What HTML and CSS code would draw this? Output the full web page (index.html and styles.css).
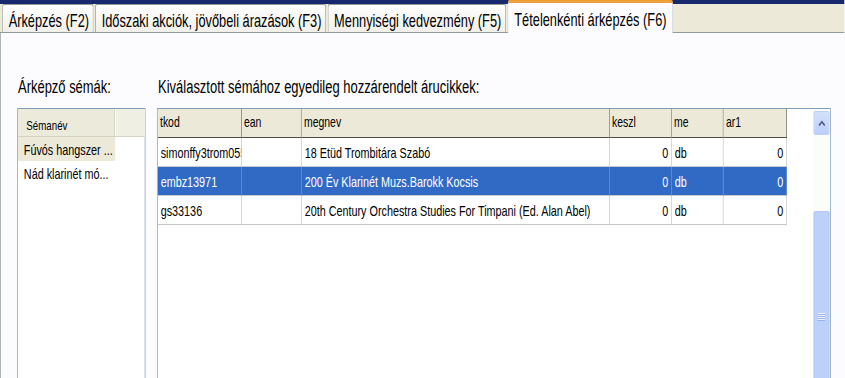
FILE: index.html
```html
<!DOCTYPE html>
<html lang="hu">
<head>
  <meta charset="UTF-8">
  <title>Tételenkénti árképzés</title>
  <link rel="stylesheet" href="styles.css">
</head>
<body>

<div class="screen">
  <div class="tabs">
    <div class="tab">Árképzés (F2)</div>
    <div class="tab">Időszaki akciók, jövőbeli árazások (F3)</div>
    <div class="tab">Mennyiségi kedvezmény (F5)</div>
    <div class="tab active">Tételenkénti árképzés (F6)</div>
  </div>

  <div class="panel">
    <!-- bal oldal: sémák -->
    <section class="schemes">
      <div class="caption">Árképző sémák:</div>
      <div class="list">
        <div class="list-head">
          <span class="list-col">Sémanév</span>
          <span class="list-rest"></span>
        </div>
        <div class="list-row selected">Fúvós hangszer ...</div>
        <div class="list-row">Nád klarinét mó...</div>
      </div>
    </section>

    <!-- jobb oldal: árucikkek -->
    <section class="items">
      <div class="caption">Kiválasztott sémához egyedileg hozzárendelt árucikkek:</div>
      <div class="grid">
        <div class="grid-body">
          <table>
            <colgroup>
              <col class="c-tkod">
              <col class="c-ean">
              <col class="c-megnev">
              <col class="c-keszl">
              <col class="c-me">
              <col class="c-ar1">
            </colgroup>
            <thead>
              <tr><th>tkod</th><th>ean</th><th>megnev</th><th>keszl</th><th>me</th><th>ar1</th></tr>
            </thead>
            <tbody>
              <tr>
                <td>simonffy3trom055</td><td></td><td>18 Etüd Trombitára Szabó</td>
                <td class="num">0</td><td>db</td><td class="num">0</td>
              </tr>
              <tr class="selected">
                <td>embz13971</td><td></td><td>200 Év Klarinét Muzs.Barokk Kocsis</td>
                <td class="num">0</td><td>db</td><td class="num">0</td>
              </tr>
              <tr>
                <td>gs33136</td><td></td><td>20th Century Orchestra Studies For Timpani (Ed. Alan Abel)</td>
                <td class="num">0</td><td>db</td><td class="num">0</td>
              </tr>
            </tbody>
          </table>
        </div>
        <div class="scrollbar">
          <div class="scroll-up">
            <svg width="11" height="7" viewBox="0 0 11 7"><path d="M1.5 5.5 L5.5 1.8 L9.5 5.5" fill="none" stroke="#4d6185" stroke-width="2"/></svg>
          </div>
          <div class="scroll-track"></div>
          <div class="scroll-thumb">
            <div class="grip"></div>
          </div>
        </div>
      </div>
    </section>
  </div>
</div>

</body>
</html>
```

FILE: styles.css
```css
body {
  margin: 0;
  overflow: hidden;
  background: #fff;
}

/* az eredeti képernyőkép vízszintesen össze van nyomva */
.screen {
  width: 1173px;
  height: 378px;
  overflow: hidden;
  transform: scaleX(0.72);
  transform-origin: 0 0;
  font-family: "Liberation Sans", Arial, sans-serif;
  color: #000;
  background: #fcfcfe;
}

/* Fülek */
.tabs {
  display: flex;
  align-items: flex-end;
  height: 32px;
  padding-left: 3px;
  background: linear-gradient(#17286c 0 4px, #ece9d8 4px);
}

.tab {
  height: 28px;
  box-sizing: border-box;
  padding: 6px 5.5px 0 8px;
  margin-right: 2px;
  border: 1px solid #919b9c;
  border-bottom: 0;
  border-radius: 3px 3px 0 0;
  background: linear-gradient(#fefefe, #f0efe8);
  font-size: 17.8px;
  line-height: 20px;
  white-space: nowrap;
  flex-shrink: 0;
}

.tab.active {
  position: relative;
  z-index: 1;
  height: 33px;
  margin-bottom: -1px;
  padding: 7px 8.5px 0 8.5px;
  border-top: 3px solid #eea13a;
  background: #fcfcfe;
}

/* Fülhöz tartozó lap */
.panel {
  display: flex;
  height: 360px;
  box-sizing: border-box;
  padding: 44px 0 0 22.6px;
  border-top: 1px solid #919b9c;
  border-left: 1px solid #919b9c;
  background: #fcfcfe;
}

.caption {
  font-size: 18px;
  line-height: 20px;
  margin: 0 0 11px 1.4px;
  white-space: nowrap;
}

.schemes {
  display: flex;
  flex-direction: column;
  width: 178px;
  flex-shrink: 0;
}

.items {
  display: flex;
  flex-direction: column;
  width: 936px;
  margin-left: 16.6px;
  flex-shrink: 0;
}

.list,
.grid {
  flex: 1;
  border: 1px solid #7f9db9;
  background: #fff;
}

/* Sémák listája */
.list-head {
  display: flex;
  height: 28px;
  box-sizing: border-box;
  background: #ebeadb;
  border-bottom: 1px solid #d6d2c2;
}

.list-col {
  width: 135px;
  box-sizing: border-box;
  padding: 9px 0 0 12px;
  font-size: 13.5px;
  line-height: 16px;
  border-right: 1px solid #c9c6b2;
}

.list-rest {
  flex: 1;
  border-left: 1px solid #fff;
  background: #f0efe4;
}

.list-row {
  width: 135px;
  height: 24px;
  box-sizing: border-box;
  padding: 1px 0 0 8.5px;
  font-size: 15px;
  line-height: 23px;
  white-space: nowrap;
}

.list-row.selected {
  background: #ece9d8;
}

/* Árucikkek rácsa */
.grid {
  display: flex;
}

.grid-body {
  flex: 1;
  overflow: hidden;
}

table {
  border-collapse: separate;
  border-spacing: 0;
  table-layout: fixed;
  width: 873.6px;
}

.c-tkod { width: 116.7px; }
.c-ean { width: 83.3px; }
.c-megnev { width: 427.8px; }
.c-keszl { width: 86.1px; }
.c-me { width: 72.2px; }
.c-ar1 { width: 87.5px; }

th {
  padding: 3px 3px 5px;
  line-height: 20px;
  font-size: 14.5px;
  font-weight: normal;
  text-align: left;
  background: #ece9d8;
  border-right: 1px solid #6f6d62;
  border-bottom: 1px solid #4e4c44;
  white-space: nowrap;
  overflow: hidden;
}

td {
  height: 27px;
  padding: 1px 4px 0;
  line-height: 27px;
  font-size: 15px;
  border-right: 1px solid #c8c8c8;
  border-bottom: 1px solid #c8c8c8;
  white-space: nowrap;
  overflow: hidden;
}

td.num {
  text-align: right;
}

tr.selected td {
  background: #316ac5;
  color: #fff;
  border-right-color: #6f93d4;
}

/* Görgetősáv */
.scrollbar {
  display: flex;
  flex-direction: column;
  width: 22px;
  margin-right: 1px;
  padding-top: 2px;
  background: #fbfbf8;
}

.scroll-up {
  display: flex;
  align-items: center;
  justify-content: center;
  height: 22px;
  border: 1px solid #b4c8f4;
  border-radius: 2px;
  background: linear-gradient(#d3e0fc, #bccff9);
}

.scroll-track {
  height: 76px;
  background: #fcfcf8;
}

.scroll-thumb {
  flex: 1;
  border: 1px solid #a9c1f2;
  border-radius: 2px;
  background: #bdd0f9;
}

.grip {
  width: 10px;
  height: 8px;
  margin: 101px auto 0;
  background: repeating-linear-gradient(#eef3fe 0 1px, #93b1ee 1px 2px);
}
```
